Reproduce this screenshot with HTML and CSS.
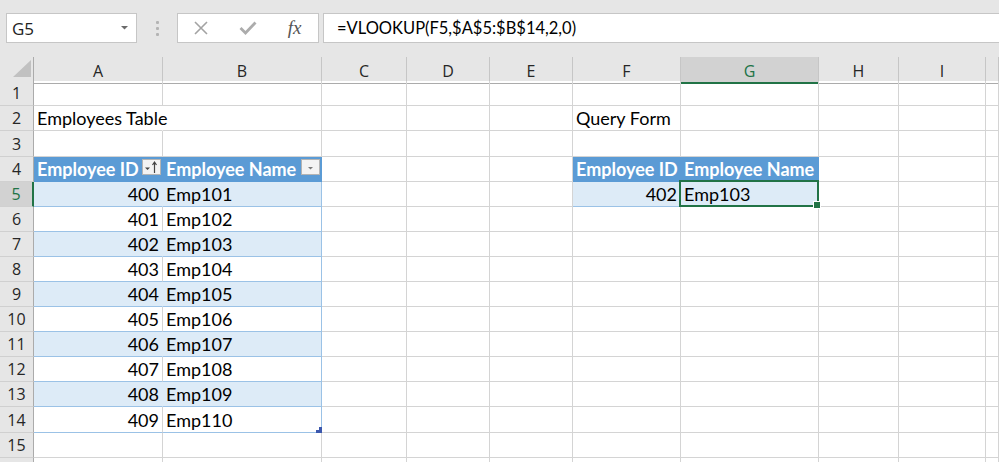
FILE: index.html
```html
<!DOCTYPE html>
<html lang="en">
<head>
  <meta charset="UTF-8" />
  <title>VLOOKUP - Excel</title>
  <link rel="stylesheet" href="styles.css">
</head>
<body>

  <!-- Name box + formula bar -->
  <div class="toolbar">
    <div class="namebox">
      <span>G5</span>
      <svg width="7" height="4" viewBox="0 0 7 4"><polygon points="0,0 7,0 3.5,3.5" fill="#6b6b6b"/></svg>
    </div>
    <div class="grip"><i></i><i></i><i></i></div>
    <div class="fx-buttons">
      <span><svg width="14" height="14" viewBox="0 0 14 14"><path d="M1 1L13 13M13 1L1 13" stroke="#a3a3a3" stroke-width="1.6" fill="none"/></svg></span>
      <span><svg width="18" height="14" viewBox="0 0 18 14"><path d="M1.5 7L6.5 12L16.5 1.5" stroke="#acacac" stroke-width="2.8" fill="none"/></svg></span>
      <span class="fx">fx</span>
    </div>
    <div class="formula">=VLOOKUP(F5,$A$5:$B$14,2,0)</div>
  </div>

  <!-- Sheet -->
  <div class="sheet">
    <div class="row head">
      <div class="corner"><svg width="33" height="23" viewBox="0 0 33 23"><polygon points="31,3 31,20 13,20" fill="#c1c1c1"/></svg></div>
      <div class="ch">A</div><div class="ch">B</div><div class="ch">C</div><div class="ch">D</div><div class="ch">E</div>
      <div class="ch">F</div><div class="ch sel">G</div><div class="ch">H</div><div class="ch">I</div><div class="ch"></div>
    </div>

    <div class="row">
      <div class="rh">1</div>
      <div class="c"></div><div class="c"></div><div class="c"></div><div class="c"></div><div class="c"></div>
      <div class="c"></div><div class="c"></div><div class="c"></div><div class="c"></div><div class="c"></div>
    </div>

    <div class="row">
      <div class="rh">2</div>
      <div class="c spill">Employees Table</div><div class="c"></div><div class="c"></div><div class="c"></div><div class="c"></div>
      <div class="c">Query Form</div><div class="c"></div><div class="c"></div><div class="c"></div><div class="c"></div>
    </div>

    <div class="row tall">
      <div class="rh">3</div>
      <div class="c"></div><div class="c"></div><div class="c"></div><div class="c"></div><div class="c"></div>
      <div class="c"></div><div class="c"></div><div class="c"></div><div class="c"></div><div class="c"></div>
    </div>

    <div class="row">
      <div class="rh">4</div>
      <div class="c th">Employee ID
        <span class="filter"><svg width="17" height="14" viewBox="0 0 17 14"><polygon points="2,7.5 7,7.5 4.5,10" fill="#444"/><path d="M11.5 13V2.5M9.5 5L11.5 2L13.5 5" stroke="#444" stroke-width="1.2" fill="none"/></svg></span>
      </div>
      <div class="c th">Employee Name
        <span class="filter"><svg width="17" height="14" viewBox="0 0 17 14"><polygon points="6,7 11,7 8.5,9.5" fill="#7a7a7a"/></svg></span>
      </div>
      <div class="c"></div><div class="c"></div><div class="c"></div>
      <div class="c th">Employee ID</div><div class="c th">Employee Name</div>
      <div class="c"></div><div class="c"></div><div class="c"></div>
    </div>

    <div class="row">
      <div class="rh sel">5</div>
      <div class="c tb band num">400</div><div class="c tb band edge">Emp101</div>
      <div class="c"></div><div class="c"></div><div class="c"></div>
      <div class="c tb band num">402</div><div class="c tb band edge sel">Emp103</div>
      <div class="c"></div><div class="c"></div><div class="c"></div>
    </div>

    <div class="row">
      <div class="rh">6</div>
      <div class="c tb num">401</div><div class="c tb edge">Emp102</div>
      <div class="c"></div><div class="c"></div><div class="c"></div><div class="c"></div><div class="c"></div><div class="c"></div><div class="c"></div><div class="c"></div>
    </div>

    <div class="row">
      <div class="rh">7</div>
      <div class="c tb band num">402</div><div class="c tb band edge">Emp103</div>
      <div class="c"></div><div class="c"></div><div class="c"></div><div class="c"></div><div class="c"></div><div class="c"></div><div class="c"></div><div class="c"></div>
    </div>

    <div class="row">
      <div class="rh">8</div>
      <div class="c tb num">403</div><div class="c tb edge">Emp104</div>
      <div class="c"></div><div class="c"></div><div class="c"></div><div class="c"></div><div class="c"></div><div class="c"></div><div class="c"></div><div class="c"></div>
    </div>

    <div class="row">
      <div class="rh">9</div>
      <div class="c tb band num">404</div><div class="c tb band edge">Emp105</div>
      <div class="c"></div><div class="c"></div><div class="c"></div><div class="c"></div><div class="c"></div><div class="c"></div><div class="c"></div><div class="c"></div>
    </div>

    <div class="row">
      <div class="rh">10</div>
      <div class="c tb num">405</div><div class="c tb edge">Emp106</div>
      <div class="c"></div><div class="c"></div><div class="c"></div><div class="c"></div><div class="c"></div><div class="c"></div><div class="c"></div><div class="c"></div>
    </div>

    <div class="row">
      <div class="rh">11</div>
      <div class="c tb band num">406</div><div class="c tb band edge">Emp107</div>
      <div class="c"></div><div class="c"></div><div class="c"></div><div class="c"></div><div class="c"></div><div class="c"></div><div class="c"></div><div class="c"></div>
    </div>

    <div class="row">
      <div class="rh">12</div>
      <div class="c tb num">407</div><div class="c tb edge">Emp108</div>
      <div class="c"></div><div class="c"></div><div class="c"></div><div class="c"></div><div class="c"></div><div class="c"></div><div class="c"></div><div class="c"></div>
    </div>

    <div class="row">
      <div class="rh">13</div>
      <div class="c tb band num">408</div><div class="c tb band edge">Emp109</div>
      <div class="c"></div><div class="c"></div><div class="c"></div><div class="c"></div><div class="c"></div><div class="c"></div><div class="c"></div><div class="c"></div>
    </div>

    <div class="row tall">
      <div class="rh">14</div>
      <div class="c tb num">409</div><div class="c tb edge resize">Emp110<span class="grab"></span></div>
      <div class="c"></div><div class="c"></div><div class="c"></div><div class="c"></div><div class="c"></div><div class="c"></div><div class="c"></div><div class="c"></div>
    </div>

    <div class="row">
      <div class="rh">15</div>
      <div class="c"></div><div class="c"></div><div class="c"></div><div class="c"></div><div class="c"></div>
      <div class="c"></div><div class="c"></div><div class="c"></div><div class="c"></div><div class="c"></div>
    </div>

    <div class="row">
      <div class="rh"></div>
      <div class="c"></div><div class="c"></div><div class="c"></div><div class="c"></div><div class="c"></div>
      <div class="c"></div><div class="c"></div><div class="c"></div><div class="c"></div><div class="c"></div>
    </div>
  </div>

</body>
</html>
```

FILE: styles.css
```css
* {
  margin: 0;
  padding: 0;
  box-sizing: border-box;
}

body {
  width: 999px;
  height: 462px;
  overflow: hidden;
  background-color: #fff;
  font-family: Lato, "Liberation Sans", sans-serif;
}

/* formula bar */
.toolbar {
  display: flex;
  height: 57px;
  padding: 13px 0 14px 6px;
  background-color: #e6e6e6;
}

.namebox {
  width: 131px;
  display: flex;
  align-items: center;
  justify-content: space-between;
  padding: 0 8px 0 5px;
  background-color: #fff;
  border: 1px solid #c6c6c6;
  font-family: "Open Sans", sans-serif;
  font-size: 17px;
  color: #222;
}

.grip {
  width: 40px;
  display: flex;
  flex-direction: column;
  align-items: center;
  justify-content: center;
  gap: 3px;
}

.grip i {
  width: 3px;
  height: 3px;
  border-radius: 1px;
  background-color: #b4b4b4;
}

.fx-buttons {
  width: 142px;
  margin-right: 4px;
  display: flex;
  background-color: #fff;
  border: 1px solid #c6c6c6;
}

.fx-buttons span {
  width: 47px;
  display: flex;
  align-items: center;
  justify-content: center;
}

.fx-buttons .fx {
  font-family: "Liberation Serif", serif;
  font-style: italic;
  font-size: 19px;
  color: #555;
}

.formula {
  flex: 1;
  margin-right: -1px;
  display: flex;
  align-items: center;
  padding-left: 13px;
  background-color: #fff;
  border: 1px solid #c6c6c6;
  font-size: 16.5px;
  color: #000;
}

/* grid */
.row {
  display: grid;
  grid-template-columns: 34px 129px 159px 85px 83px 83px 108px 138px 80px 87px 1fr;
  height: 25px;
}

.row.tall {
  height: 26px;
}

.row.head {
  height: 24px;
  background-color: #e6e6e6;
}

.corner {
  border-right: 1px solid #ababab;
  border-bottom: 1px solid #ababab;
}

.ch {
  display: flex;
  align-items: center;
  justify-content: center;
  padding-top: 2px;
  border-right: 1px solid #c6c6c6;
  border-bottom: 1px solid #ababab;
  font-family: "Open Sans", sans-serif;
  font-size: 16px;
  color: #262626;
}

.ch.sel {
  background-color: #d2d2d2;
  color: #217346;
  border-bottom: 2px solid #217346;
}

.rh {
  display: flex;
  align-items: center;
  justify-content: center;
  background-color: #e6e6e6;
  border-right: 1px solid #ababab;
  border-bottom: 1px solid #d0d0d0;
  font-family: "Open Sans", sans-serif;
  font-size: 16px;
  color: #262626;
}

.rh.sel {
  background-color: #d2d2d2;
  color: #217346;
  border-right: 2px solid #217346;
}

.c {
  display: flex;
  align-items: center;
  padding: 0 3px;
  border-right: 1px solid #d4d4d4;
  border-bottom: 1px solid #d4d4d4;
  font-size: 18px;
  line-height: 24px;
  white-space: nowrap;
  color: #000;
}

.c.spill {
  border-right-color: #fff;
}

.c.num {
  justify-content: flex-end;
}

/* table styles */
.c.th {
  padding-right: 1px;
  background-color: #5b9bd5;
  border-right-color: #5b9bd5;
  border-bottom-color: #5b9bd5;
  color: #fff;
  font-weight: bold;
}

.c.tb {
  border-bottom-color: #9bc2e6;
}

.c.band {
  background-color: #ddebf7;
  border-right-color: #ddebf7;
}

.c.edge {
  border-right-color: #9bc2e6;
}

.filter {
  margin-left: auto;
  align-self: flex-start;
  margin-top: 2px;
  width: 19px;
  height: 16px;
  display: flex;
  align-items: center;
  justify-content: center;
  background-color: #f3f3f3;
  border: 1px solid #b4b4b4;
}

/* active cell */
.c.sel {
  position: relative;
}

.c.sel::after {
  content: "";
  position: absolute;
  left: -2px;
  top: -2px;
  right: -1px;
  bottom: -1px;
  border: 2px solid #217346;
}

.c.sel::before {
  content: "";
  position: absolute;
  right: -3px;
  bottom: -3px;
  width: 6px;
  height: 6px;
  background-color: #217346;
  border: 1px solid #fff;
  z-index: 1;
}

.c.resize {
  position: relative;
}

.grab {
  position: absolute;
  right: -1px;
  bottom: -1px;
  width: 6px;
  height: 6px;
  border-right: 3px solid #3b57ad;
  border-bottom: 3px solid #3b57ad;
}
```
